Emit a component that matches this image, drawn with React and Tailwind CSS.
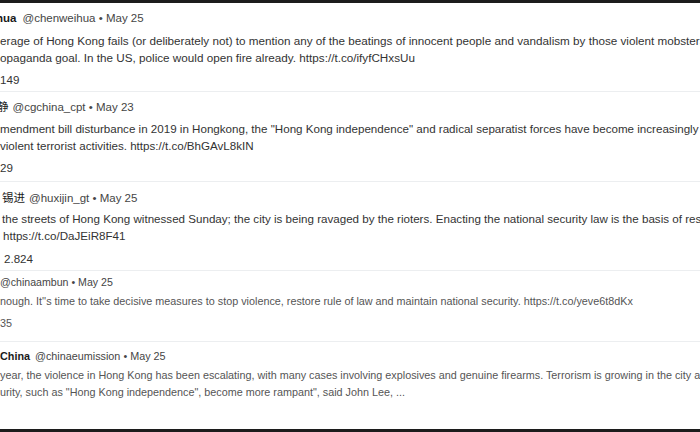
import React from "react";

// Cropped tweet list (left and right edges cut off as in the capture)
function Tweet({ wrap, name, handle, headClass, nameClass, lines, bodyClass, count, countClass }) {
    return (
        <div className={wrap}>
            <div className={headClass}>
                {name && <span className={nameClass}>{name}</span>}
                <span className="text-[#454545]">{handle}</span>
            </div>
            <div className={bodyClass}>
                {lines.map((l, i) => (
                    <div key={i} className="whitespace-nowrap">{l}</div>
                ))}
            </div>
            {count && <div className={countClass}>{count}</div>}
        </div>
    );
}

export default function App() {
    return (
        <div
            className="w-[700px] h-[432px] overflow-hidden bg-white flex flex-col border-t-[3px] border-b-[3px] border-[#1c1c1c] text-[#2a2a2a]"
            style={{ fontFamily: '"Liberation Sans", "Noto Sans CJK SC", sans-serif' }}
        >
            {/* Tweet 1 */}
            <Tweet
                wrap="pt-[6px] pb-[2px] border-b border-[#eceef0]"
                name="hua"
                headClass="h-[18px] leading-[18px] whitespace-nowrap text-[11.5px]"
                nameClass="font-bold text-[#1a1a1a] ml-[-4px] mr-[6px]"
                handle="@chenweihua • May 25"
                lines={[
                    "erage of Hong Kong fails (or deliberately not) to mention any of the beatings of innocent people and vandalism by those violent mobsters",
                    "opaganda goal. In the US, police would open fire already. https://t.co/ifyfCHxsUu",
                ]}
                bodyClass="mt-[5px] text-[11.7px] leading-[17px] text-[#333]"
                count="149"
                countClass="mt-[5px] h-[18px] leading-[18px] text-[11.6px] text-[#333]"
            />

            {/* Tweet 2 */}
            <Tweet
                wrap="pt-[6px] pb-[4px] border-b border-[#eceef0]"
                name="静"
                headClass="h-[18px] leading-[18px] whitespace-nowrap text-[11.5px]"
                nameClass="text-[#1a1a1a] ml-[-3px] mr-[4px]"
                handle="@cgchina_cpt • May 23"
                lines={[
                    "mendment bill disturbance in 2019 in Hongkong, the \"Hong Kong independence\" and radical separatist forces have become increasingly",
                    "violent terrorist activities. https://t.co/BhGAvL8kIN",
                ]}
                bodyClass="mt-[4px] text-[11.6px] leading-[17px] text-[#333]"
                count="29"
                countClass="mt-[5px] h-[18px] leading-[18px] text-[11.6px] text-[#333]"
            />

            {/* Tweet 3 */}
            <Tweet
                wrap="pt-[7px] pb-[2px] border-b border-[#eceef0] pl-[2px]"
                name="锡进"
                headClass="h-[18px] leading-[18px] whitespace-nowrap text-[11.5px]"
                nameClass="text-[#1a1a1a] mr-[4px]"
                handle="@huxijin_gt • May 25"
                lines={[
                    " the streets of Hong Kong witnessed Sunday; the city is being ravaged by the rioters. Enacting the national security law is the basis of restoring",
                    "https://t.co/DaJEiR8F41",
                ]}
                bodyClass="mt-[3px] text-[11.6px] leading-[17px] text-[#333] [&>div:last-child]:pl-[1px]"
                count="2.824"
                countClass="mt-[6px] h-[18px] leading-[18px] text-[11.6px] text-[#333] pl-[2px]"
            />

            {/* Tweet 4 */}
            <Tweet
                wrap="pt-[2px] pb-[10px] border-b border-[#eceef0]"
                headClass="h-[18px] leading-[18px] whitespace-nowrap text-[10.6px]"
                handle="@chinaambun • May 25"
                lines={[
                    "nough. It''s time to take decisive measures to stop violence, restore rule of law and maintain national security. https://t.co/yeve6t8dKx",
                ]}
                bodyClass="mt-[2px] text-[10.8px] leading-[16px] text-[#555]"
                count="35"
                countClass="mt-[6px] h-[16px] leading-[16px] text-[10.8px] text-[#555]"
            />

            {/* Tweet 5 */}
            <Tweet
                wrap="pt-[5px] flex-1"
                name="China"
                headClass="h-[18px] leading-[18px] whitespace-nowrap text-[10.8px]"
                nameClass="font-bold text-[#1a1a1a] mr-[5px]"
                handle="@chinaeumission • May 25"
                lines={[
                    "year, the violence in Hong Kong has been escalating, with many cases involving explosives and genuine firearms. Terrorism is growing in the city and",
                    "urity, such as \"Hong Kong independence\", become more rampant\", said John Lee, ...",
                ]}
                bodyClass="mt-[2px] text-[10.8px] leading-[17px] text-[#555]"
            />
        </div>
    );
}
